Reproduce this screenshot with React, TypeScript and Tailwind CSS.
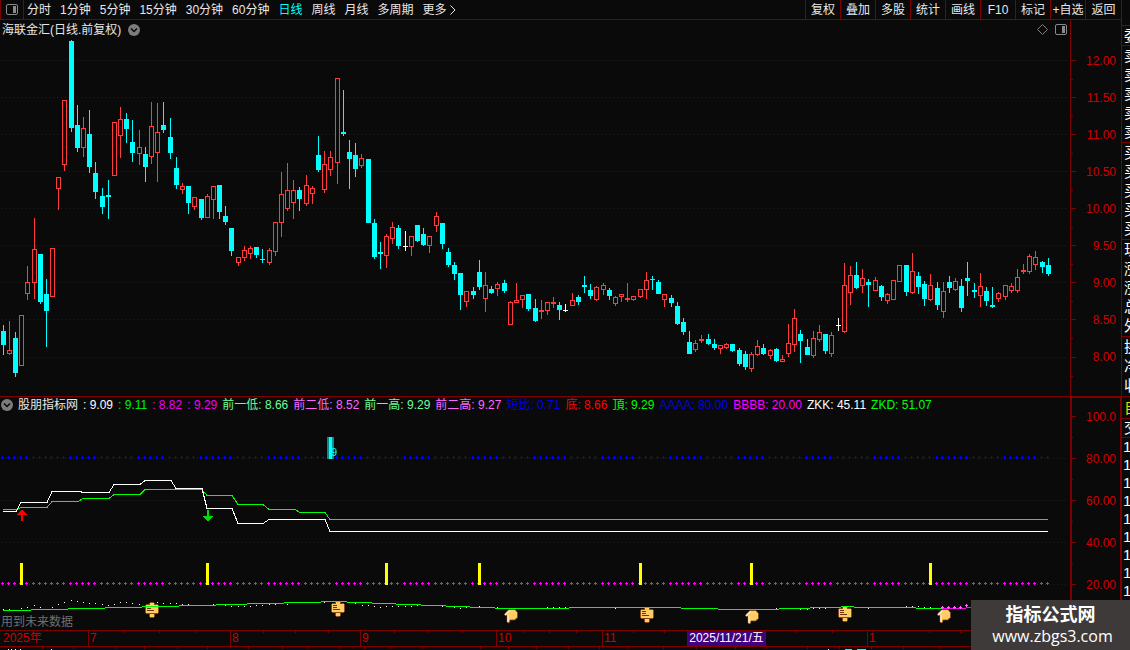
type Kind = 'up' | 'down' | 'flat';

const periods = ['分时', '1分钟', '5分钟', '15分钟', '30分钟', '60分钟', '日线', '周线', '月线', '多周期'];
const tools = ['复权', '叠加', '多股', '统计', '画线', 'F10', '标记', '+自选', '返回'];
const prices = ['12.00', '11.50', '11.00', '10.50', '10.00', '9.50', '9.00', '8.50', '8.00'];
const priceRows = [60, 97, 134, 171, 208, 245, 282, 319, 357];
const levels = ['100.0', '80.00', '60.00', '40.00', '20.00'];
const levelRows = [458, 500, 542, 584];

// one bar per entry: kind, high, body top, body bottom, low
const bars = `
d 325 331 345 355|u 321 350 354 355|d 332 338 373 377|u 315 315 366 366|u 266 282 294 300|u 218 249 283 299
d 254 254 302 304|d 279 294 311 347|u 248 248 297 297|u 177 177 189 210|u 100 100 165 171|d 40 41 128 132
d 105 125 148 152|u 117 128 148 157|d 110 134 167 173|d 162 173 192 199|d 188 196 207 214|d 180 195 197 219
u 122 122 176 176|u 107 119 136 158|d 113 119 129 143|d 120 142 153 162|u 130 147 154 165|d 147 154 167 182
u 102 126 157 164|u 103 132 153 182|d 102 125 130 133|d 118 137 153 159|d 157 168 185 189|u 183 186 190 194
d 186 186 203 214|u 197 197 207 210|d 199 199 218 220|u 194 196 218 218|u 186 186 200 219|d 185 185 212 219
d 206 216 222 225|d 228 228 251 256|u 257 257 263 266|u 246 250 258 261|u 246 248 254 259|d 247 247 255 258
d 249 259 260 263|u 248 250 263 265|u 222 222 252 256|u 172 194 223 237|u 163 190 209 211|u 180 190 203 219
d 187 190 199 211|u 175 185 204 206|u 186 188 194 204|d 136 155 170 172|u 151 164 190 193|u 151 157 170 176
u 78 78 163 184|d 90 132 134 136|d 140 152 159 189|d 143 155 169 177|u 154 158 166 168|d 159 159 223 223
d 219 223 257 259|d 242 252 254 269|u 234 236 256 268|u 222 227 239 244|d 225 228 246 249|f 231 246 247 251
u 236 236 247 256|d 225 225 241 242|d 228 234 245 246|u 236 236 246 253|u 212 216 226 232|d 223 223 244 249
d 248 252 265 267|d 262 265 274 280|d 273 273 295 310|u 291 291 302 307|d 287 291 295 299|d 260 272 287 290
u 272 285 299 312|d 286 289 293 294|u 282 284 289 296|d 280 283 291 293|u 301 302 325 325|u 283 300 303 303
u 295 295 300 308|d 294 294 309 311|d 299 308 321 322|u 300 310 312 319|u 302 302 311 315|u 297 302 304 308
d 302 305 310 320|f 304 310 311 312|u 293 300 306 306|d 295 297 302 305|d 276 285 287 293|d 284 290 296 299
u 286 287 300 301|u 283 285 290 295|d 288 290 296 300|u 296 297 304 306|u 294 294 297 302|u 283 298 300 302
u 296 296 300 301|u 289 289 297 298|u 272 280 290 299|d 276 279 280 290|d 280 282 294 294|u 294 294 300 307
d 295 298 303 307|d 302 306 324 325|d 318 322 332 335|d 331 342 354 354|u 340 343 350 352|u 335 339 341 343
d 334 339 344 345|d 339 344 348 350|u 345 345 349 354|u 343 344 348 349|d 344 344 351 352|d 348 350 364 366
d 351 354 367 370|u 352 354 369 372|u 340 346 355 356|d 344 348 354 355|u 349 350 356 359|d 348 349 361 362
u 355 359 362 362|u 324 343 354 357|u 309 318 345 352|d 330 334 341 363|d 339 347 355 355|u 331 338 356 358
u 325 332 340 342|d 334 334 351 354|u 332 335 354 357|f 318 325 326 331|u 263 285 332 333|u 266 275 293 305
d 262 275 288 289|u 269 278 286 293|d 279 282 285 307|u 277 280 291 291|d 285 286 297 301|u 293 294 301 304
u 280 280 300 300|u 265 265 282 282|d 265 265 292 296|u 253 271 293 294|d 272 276 287 294|d 281 284 299 306
u 274 285 300 301|d 282 288 305 310|u 282 291 312 318|d 276 282 288 293|u 278 281 290 291|d 279 286 308 312
d 262 278 281 296|d 283 290 292 298|u 273 286 296 307|d 287 291 301 306|d 287 305 307 308|u 292 293 299 302
u 285 285 297 300|u 283 286 291 293|u 269 277 291 293|u 264 270 272 274|u 254 256 272 274|u 251 257 265 270
d 261 262 267 273|d 258 265 274 276`
  .trim()
  .split(/[|\n]/)
  .map((row, i) => {
    const [k, ...v] = row.split(' ');
    const [high, top, bottom, low] = v.map(Number);
    const kind: Kind = k === 'u' ? 'up' : k === 'd' ? 'down' : 'flat';
    return { kind, high, top, bottom, low, x: Math.floor(3.092 + i * 6.185) };
  });

const colors = { up: '#ff3c3c', down: '#00ffff', flat: '#ffffff' };

const readings = [
  { text: ': 9.09', color: 'text-white' },
  { text: ': 9.11', color: 'text-[#00f000]' },
  { text: ': 8.82', color: 'text-[#f000f0]' },
  { text: ': 9.29', color: 'text-[#f000f0]' },
  { text: '前一低: 8.66', color: 'text-[#66ff99]' },
  { text: '前二低: 8.52', color: 'text-[#ff66ff]' },
  { text: '前一高: 9.29', color: 'text-[#66ff99]' },
  { text: '前二高: 9.27', color: 'text-[#ff66ff]' },
  { text: '短比: 0.71', color: 'text-[#0000e6]' },
  { text: '底: 8.66', color: 'text-[#ff0000]' },
  { text: '頂: 9.29', color: 'text-[#00ff00]' },
  { text: 'AAAA: 80.00', color: 'text-[#0000e6]' },
  { text: 'BBBB: 20.00', color: 'text-[#ff00ff]' },
  { text: 'ZKK: 45.11', color: 'text-white' },
  { text: 'ZKD: 51.07', color: 'text-[#00ff00]' },
];

const zkk =
  '3,511 16,511 21,502 47,502 52,491 81,491 82,492 109,492 114,484 140,484 145,480 171,480 176,488 202,488 207,508 232,508 238,523 263,523 269,519 325,519 330,531 1048,531';
const zkd =
  '3,509 16,509 21,507 47,507 52,501 78,501 83,498 109,498 114,494 140,494 145,489 202,489 207,495 232,495 238,504 263,504 269,509 295,509 300,512 325,512 330,519 1048,519';

// start x, y; each step runs up to the start of the next one
const trend = [
  [3, 610], [31, 609], [68, 608], [105, 607], [142, 606], [179, 605], [216, 604], [247, 603], [284, 602],
  [321, 601], [347, 602], [372, 603], [396, 604], [421, 605], [446, 606], [470, 607], [495, 608], [569, 607],
  [681, 608], [718, 609], [779, 608], [810, 607], [841, 606], [854, 607], [916, 608], [942, 608],
];

const dots = [
  [3, 609], [9, 609], [21, 608], [27, 607], [34, 605], [40, 607], [52, 607], [58, 604], [64, 602], [71, 600],
  [77, 601], [83, 602], [89, 603], [95, 603], [102, 604], [108, 605], [114, 604], [120, 602], [126, 602],
  [132, 603], [139, 604], [157, 602], [163, 603], [170, 603], [176, 603], [182, 604], [188, 604], [213, 604],
  [225, 605], [231, 606], [238, 606], [244, 606], [250, 606], [256, 605], [262, 605], [269, 604], [275, 604],
  [281, 603], [287, 604], [324, 602], [349, 602], [355, 603], [362, 605], [368, 605], [374, 606], [380, 607],
  [386, 606], [392, 606], [398, 606], [405, 606], [411, 606], [417, 605], [442, 606], [454, 607], [460, 608],
  [466, 607], [479, 606], [497, 607], [547, 607], [553, 607], [559, 607], [565, 607], [615, 608], [776, 608],
  [800, 609], [807, 609], [813, 608], [819, 608], [825, 608], [868, 608], [906, 606], [912, 606], [918, 606],
  [924, 607], [930, 607],
];

const signals = [21, 207, 386, 479, 640, 751, 930];
const boards = [[145, 602], [331, 601], [640, 607], [838, 606]];
const hands = [[504, 609], [745, 610], [937, 609]];

const months = [
  { label: '2025年', span: 88 },
  { label: '7', span: 142 },
  { label: '8', span: 130 },
  { label: '9', span: 136 },
  { label: '10', span: 106 },
  { label: '11', span: 265 },
  { label: '1', span: 254 },
];
const weekTicks = [124, 159, 195, 263, 295, 328, 394, 428, 462, 523, 549, 576, 633, 664, 796, 832, 929, 960];
const lowerTicks = [42, 73, 115, 144, 177, 207, 248, 282, 308, 340, 364, 390, 422, 480, 508, 536, 568, 599, 628, 663, 696, 735, 766, 807, 839, 871, 903, 940];

const quoteGroups = [
  { rows: ['委'], height: 'h-5', color: 'text-white' },
  { rows: ['卖', '卖', '卖', '卖', '卖'], height: 'h-[97px]', color: 'text-white' },
  { rows: ['买', '买', '买', '买', '买'], height: 'h-[97px]', color: 'text-white' },
  { rows: ['现', '涨', '涨', '总', '外'], height: 'h-[97px]', color: 'text-white' },
  { rows: ['换', '净', '收'], height: 'h-[60px]', color: 'text-white' },
  { rows: ['自'], height: 'h-[22px]', color: 'text-[#e0e000]' },
  { rows: ['交'], height: 'h-[19px]', color: 'text-white' },
];

function PanelIcon() {
  return (
    <svg width="12" height="11" viewBox="0 0 12 11" fill="none">
      <rect x="0.5" y="0.5" width="11" height="10" rx="1.5" stroke="#8a8a8a" />
      <rect x="7" y="2" width="3" height="7" fill="#8a8a8a" />
    </svg>
  );
}

function CollapseButton({ label }: { label: string }) {
  return (
    <button type="button" aria-label={label} className="shrink-0">
      <svg width="12" height="12" viewBox="0 0 12 12" fill="none" className="block">
        <circle cx="6" cy="6" r="6" fill="#7c7c7c" />
        <path d="M3 4.5 6 7.5 9 4.5" stroke="#0a0a0a" strokeWidth="1.5" />
      </svg>
    </button>
  );
}

function Grid({ rows }: { rows: number[] }) {
  return (
    <>
      {rows.map((y) => (
        <line key={y} x1="1" x2="1067" y1={y + 0.5} y2={y + 0.5} stroke="#6a0000" strokeDasharray="1 3" />
      ))}
    </>
  );
}

function Cross({ x, y, color }: { x: number; y: number; color: string }) {
  return <path d={`M${x - 1} ${y + 0.5}h3M${x + 0.5} ${y - 1}v3`} stroke={color} />;
}

function Board({ x, y }: { x: number; y: number }) {
  return (
    <g transform={`translate(${x} ${y})`}>
      <path d="M5 0h4v1h1v1h3v1h1v8h-1v1h-3v3h-1v1h-4v-1h-1v-3h-3v-1h-1v-8h1v-1h3v-1h1z" fill="#8a4a18" />
      <path d="M5 1h4v2h4v8h-12v-8h4zM5 12h4v3h-4z" fill="#ffcc66" />
      <path d="M2 4.5h4M2 6.5h4M2 8.5h7" stroke="#6b3410" />
    </g>
  );
}

function Hand({ x, y }: { x: number; y: number }) {
  return (
    <g transform={`translate(${x} ${y})`} shapeRendering="auto">
      <path
        d="M5 0.500h6l2.500 3v5l-3 2.500h-4.500l-0.500 2.500-1.500 0.500-1-1.500v-6l-2.500-0.500 0.500-1.500z"
        fill="#ffcc66"
        stroke="#7a4014"
        strokeWidth="0.8"
      />
      <path d="M1 6 5.500 1.500M4 6v7" stroke="#ffeedd" strokeWidth="1.4" />
    </g>
  );
}

function PriceChart() {
  return (
    <svg viewBox="0 39 1070 357" preserveAspectRatio="none" shapeRendering="crispEdges" className="block min-h-0 w-full flex-1">
      <Grid rows={priceRows} />
      {bars.map((b) => (
        <g key={b.x} fill={colors[b.kind]}>
          <rect x={b.x} y={b.high} width="1" height={b.top - b.high} />
          <rect x={b.x} y={b.bottom} width="1" height={b.low - b.bottom} />
          {b.kind === 'up' ? (
            <rect x={b.x - 1.5} y={b.top + 0.5} width="4" height={b.bottom - b.top - 1} fill="#0a0a0a" stroke={colors.up} />
          ) : (
            <rect x={b.x - 2} y={b.top} width="5" height={b.bottom - b.top} />
          )}
        </g>
      ))}
    </svg>
  );
}

function IndicatorChart() {
  const path = trend
    .slice(0, -1)
    .map(([x, y], i) => `M${x} ${y + 0.5}H${trend[i + 1][0]}`)
    .join('');

  return (
    <svg viewBox="0 414 1070 216" preserveAspectRatio="none" shapeRendering="crispEdges" className="block min-h-0 w-full flex-1">
      <Grid rows={levelRows} />
      {bars.map((b) => (
        <g key={b.x}>
          <Cross x={b.x - 1} y={457} color="#0000ff" />
          <Cross x={b.x - 1} y={583} color="#ff00ff" />
        </g>
      ))}
      {signals.map((x) => (
        <rect key={x} x={x - 1} y="563" width="3" height="22" fill="#ffff00" />
      ))}

      <rect x="327" y="437" width="7" height="22" fill="#009090" />
      <rect x="329" y="437" width="3" height="22" fill="#00ffff" />
      <text x="331" y="456" fill="#00ffff" fontSize="11" shapeRendering="auto">9</text>

      <g transform="translate(0 0.5)" fill="none">
        <polyline points={zkd} stroke="#00ff00" />
        <polyline points={zkk} stroke="#ffffff" />
      </g>
      <path d="M22 509l5 6h-4v6h-2v-6h-4z" fill="#ff0000" />
      <path d="M207 510h2v6h4l-5 6-5-6h4z" fill="#00e000" />

      {dots.map(([x, y]) => (
        <rect key={x} x={x} y={y} width="1" height="1" fill="#ffffff" />
      ))}
      {boards.map(([x, y]) => (
        <Board key={x} x={x} y={y} />
      ))}
      <path d={path} stroke="#00ff00" />
      <path d="M942 608.5h24M966 607.500h104" stroke="#ff00ff" />
      {[942, 948, 954, 960].map((x) => (
        <Cross key={x} x={x} y={607} color="#ff66ff" />
      ))}
      <Cross x={966} y={605} color="#ff66ff" />
      {hands.map(([x, y]) => (
        <Hand key={x} x={x} y={y} />
      ))}
    </svg>
  );
}

function Toolbar() {
  return (
    <nav className="flex h-5 shrink-0 border-b border-[#800000] text-[#e8e8e8]">
      <button type="button" aria-label="侧栏" className="flex w-6 items-center justify-center border-x border-[#800000]">
        <PanelIcon />
      </button>
      <div className="flex flex-1 items-center gap-[9px] pl-[3px]">
        {periods.map((p) => (
          <button key={p} type="button" className={p === '日线' ? 'text-[#00ffff]' : ''}>
            {p}
          </button>
        ))}
        <button type="button" className="flex items-center gap-[3px]">
          更多
          <svg width="6" height="10" viewBox="0 0 6 10" fill="none">
            <path d="M0.500 0.500 5 5 0.500 9.500" stroke="currentColor" />
          </svg>
        </button>
      </div>
      <div className="flex">
        {tools.map((t) => (
          <button key={t} type="button" className="w-[35px] whitespace-nowrap border-l border-[#800000] last:w-9">
            {t}
          </button>
        ))}
      </div>
    </nav>
  );
}

function PriceSection() {
  return (
    <section className="flex min-h-0 flex-1">
      <div className="flex min-w-0 flex-1 flex-col">
        <header className="flex h-[19px] shrink-0 items-center gap-[7px] pl-[2px] pr-[3px]">
          <h1 className="text-[#e8e8e8]">海联金汇(日线.前复权)</h1>
          <CollapseButton label="指标菜单" />
          <div className="ml-auto flex items-center gap-[7px]">
            <svg width="11" height="11" viewBox="0 0 11 11" fill="none">
              <path d="M5.500 0.500 10.500 5.500 5.500 10.500 0.500 5.500z" stroke="#808080" />
            </svg>
            <PanelIcon />
          </div>
        </header>
        <PriceChart />
      </div>
      <div className="flex w-[51px] shrink-0 border-l border-[#800000]">
        <svg viewBox="0 20 8 376" preserveAspectRatio="none" shapeRendering="crispEdges" className="h-full w-2 shrink-0">
          {priceRows.map((y) => (
            <path key={y} d={`M0 ${y + 0.5}h5M0 ${y + 19.5}h2`} stroke="#800000" />
          ))}
        </svg>
        <ul className="flex-1 pr-[5px] pt-8 text-right text-[#d00000]">
          {prices.map((p) => (
            <li key={p} className="mb-[19px] h-[18px] leading-[18px]">{p}</li>
          ))}
        </ul>
      </div>
    </section>
  );
}

function IndicatorSection() {
  return (
    <section className="flex h-[36%] shrink-0 border-t border-[#800000]">
      <div className="relative flex min-w-0 flex-1 flex-col">
        <header className="flex h-4 shrink-0 items-center gap-[5px] whitespace-pre pl-px">
          <CollapseButton label="副图菜单" />
          <h2 className="text-[#e8e8e8]">股朋指标网</h2>
          {readings.map((r) => (
            <span key={r.text} className={r.color}>{r.text}</span>
          ))}
        </header>
        <div className="h-px shrink-0" />
        <IndicatorChart />
        <p className="absolute bottom-0 left-px h-4 leading-4 text-[#707070]">用到未来数据</p>
      </div>
      <div className="flex w-[51px] shrink-0 border-l-2 border-r border-t border-[#800000]">
        <svg viewBox="0 398 8 232" preserveAspectRatio="none" shapeRendering="crispEdges" className="h-full w-2 shrink-0">
          {[416, ...levelRows].map((y) => (
            <path key={y} d={`M0 ${y + 0.5}h4M0 ${y + 21.5}h1`} stroke="#800000" />
          ))}
        </svg>
        <ul className="flex-1 pr-1 pt-[10px] text-right text-[#d00000]">
          {levels.map((l) => (
            <li key={l} className="mb-6 h-[18px] leading-[18px]">{l}</li>
          ))}
        </ul>
      </div>
    </section>
  );
}

function DateAxis() {
  return (
    <footer className="relative h-5 shrink-0">
      <div className="flex h-[17px] border-y border-[#800000] text-[#d00000]">
        {months.map((m, i) => (
          <div key={m.label} className="min-w-0 basis-0" style={{ flexGrow: m.span }}>
            <span className={`block leading-[15px] ${i ? 'border-l border-[#800000] pl-px' : 'pl-[3px]'}`}>{m.label}</span>
          </div>
        ))}
      </div>
      <svg viewBox="0 0 1121 20" preserveAspectRatio="none" shapeRendering="crispEdges" className="absolute inset-0 h-full w-full">
        {weekTicks.map((x) => (
          <rect key={x} x={x} y="1" width="1" height="2" fill="#800000" />
        ))}
        {lowerTicks.map((x) => (
          <rect key={x} x={x} y="17" width="1" height="2" fill="#800000" />
        ))}
        <path d="M8 19.500h1M11 19.500h1M15 19.500h1M20 19.500h1M51 19.500h1M828 19.500h1" stroke="#ffffff" />
        <path d="M845 19.500h7M857 19.500h9" stroke="#00ffff" />
      </svg>
      <time className="absolute left-[687px] top-0 h-[17px] w-[79px] border border-[#800000] bg-[#400080] text-center leading-[15px] text-white">
        2025/11/21/五
      </time>
    </footer>
  );
}

function QuoteStrip() {
  return (
    <aside className="w-[9px] shrink-0 overflow-hidden border-l border-[#800000] text-[15px]">
      <div className="h-[26px] border-b border-[#800000]" />
      {quoteGroups.map((g, i) => (
        <div key={i} className={`flex flex-col justify-around border-b border-[#800000] pl-[2px] ${g.height} ${g.color}`}>
          {g.rows.map((r, j) => (
            <span key={j} className="w-4 leading-[18px]">{r}</span>
          ))}
        </div>
      ))}
      {Array.from({ length: 9 }, (_, i) => (
        <div key={i} className="h-[18px] pl-px leading-[18px] text-white">1</div>
      ))}
    </aside>
  );
}

export default function App() {
  return (
    <div className="relative flex h-screen overflow-hidden bg-[#0a0a0a] font-['Liberation_Sans','Noto_Sans_CJK_SC',sans-serif] text-xs">
      <main className="flex min-w-0 flex-1 flex-col">
        <Toolbar />
        <PriceSection />
        <IndicatorSection />
        <DateAxis />
      </main>
      <QuoteStrip />

      {/* Site badge */}
      <div className="absolute bottom-0 right-0 flex h-[50px] w-[159px] flex-col items-center bg-[#3f3a3a] pt-1 text-white">
        <strong className="text-lg leading-[22px]">指标公式网</strong>
        <a href="#" className="pl-1 font-['Open_Sans',sans-serif] text-base leading-5">www.zbgs3.com</a>
      </div>
    </div>
  );
}
